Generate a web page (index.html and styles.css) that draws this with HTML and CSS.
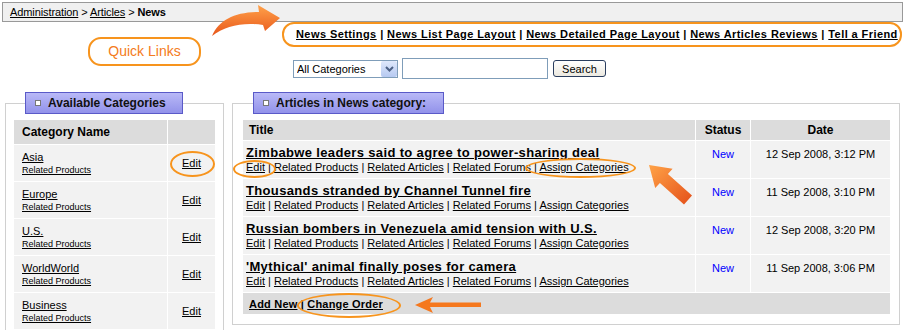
FILE: index.html
```html
<!DOCTYPE html>
<html lang="en">
<head>
    <meta charset="UTF-8">
    <title>News - Administration</title>
    <link rel="stylesheet" href="styles.css">
</head>
<body>
    <div class="crumbs">
        <a href="#">Administration</a> &gt; <a href="#">Articles</a> &gt; <b>News</b>
    </div>

    <div class="quick-links">
        <a href="#">News Settings</a> | <a href="#">News List Page Layout</a> | <a href="#">News Detailed Page Layout</a> | <a href="#">News Articles Reviews</a> | <a href="#">Tell a Friend</a>
    </div>

    <form class="search" onsubmit="return false">
        <span class="select-wrap">
            <select>
                <option>All Categories</option>
                <option>Asia</option>
                <option>Europe</option>
            </select>
            <span class="select-btn">
                <svg width="9" height="6" viewBox="0 0 9 6"><path d="M1 1 L4.5 4.5 L8 1" fill="none" stroke="#4d6185" stroke-width="2"/></svg>
            </span>
        </span>
        <input type="text" class="search-box">
        <button type="submit" class="search-btn">Search</button>
    </form>

    <div class="panels">
        <fieldset class="panel panel-left">
            <legend><span class="box"></span>Available Categories</legend>
            <table class="grid cats">
                <tr class="head">
                    <th class="name">Category Name</th>
                    <th></th>
                </tr>
                <tr>
                    <td class="name"><a href="#">Asia</a><br><a href="#" class="small">Related Products</a></td>
                    <td class="edit"><a href="#">Edit</a></td>
                </tr>
                <tr>
                    <td class="name"><a href="#">Europe</a><br><a href="#" class="small">Related Products</a></td>
                    <td class="edit"><a href="#">Edit</a></td>
                </tr>
                <tr>
                    <td class="name"><a href="#">U.S.</a><br><a href="#" class="small">Related Products</a></td>
                    <td class="edit"><a href="#">Edit</a></td>
                </tr>
                <tr>
                    <td class="name"><a href="#">WorldWorld</a><br><a href="#" class="small">Related Products</a></td>
                    <td class="edit"><a href="#">Edit</a></td>
                </tr>
                <tr>
                    <td class="name"><a href="#">Business</a><br><a href="#" class="small">Related Products</a></td>
                    <td class="edit"><a href="#">Edit</a></td>
                </tr>
            </table>
        </fieldset>

        <fieldset class="panel panel-right">
            <legend><span class="box"></span>Articles in News category:</legend>
            <table class="grid articles">
                <tr class="head">
                    <th class="title">Title</th>
                    <th class="status">Status</th>
                    <th class="date">Date</th>
                </tr>
                <tr>
                    <td class="title">
                        <a href="#" class="headline">Zimbabwe leaders said to agree to power-sharing deal</a><br>
                        <a href="#">Edit</a> | <a href="#">Related Products</a> | <a href="#">Related Articles</a> | <a href="#">Related Forums</a> | <a href="#">Assign Categories</a>
                    </td>
                    <td class="status"><span class="new">New</span></td>
                    <td class="date">12 Sep 2008, 3:12 PM</td>
                </tr>
                <tr>
                    <td class="title">
                        <a href="#" class="headline">Thousands stranded by Channel Tunnel fire</a><br>
                        <a href="#">Edit</a> | <a href="#">Related Products</a> | <a href="#">Related Articles</a> | <a href="#">Related Forums</a> | <a href="#">Assign Categories</a>
                    </td>
                    <td class="status"><span class="new">New</span></td>
                    <td class="date">11 Sep 2008, 3:10 PM</td>
                </tr>
                <tr>
                    <td class="title">
                        <a href="#" class="headline">Russian bombers in Venezuela amid tension with U.S.</a><br>
                        <a href="#">Edit</a> | <a href="#">Related Products</a> | <a href="#">Related Articles</a> | <a href="#">Related Forums</a> | <a href="#">Assign Categories</a>
                    </td>
                    <td class="status"><span class="new">New</span></td>
                    <td class="date">12 Sep 2008, 3:20 PM</td>
                </tr>
                <tr>
                    <td class="title">
                        <a href="#" class="headline">'Mythical' animal finally poses for camera</a><br>
                        <a href="#">Edit</a> | <a href="#">Related Products</a> | <a href="#">Related Articles</a> | <a href="#">Related Forums</a> | <a href="#">Assign Categories</a>
                    </td>
                    <td class="status"><span class="new">New</span></td>
                    <td class="date">11 Sep 2008, 3:06 PM</td>
                </tr>
                <tr class="foot">
                    <td colspan="3"><a href="#">Add New</a> | <a href="#">Change Order</a></td>
                </tr>
            </table>
        </fieldset>
    </div>

    <!-- callouts drawn over the page -->
    <div class="pill">Quick Links</div>
    <svg class="arrow-curve" width="80" height="40" viewBox="0 0 80 40">
        <defs>
            <linearGradient id="gc" x1="0" y1="0" x2="0" y2="1">
                <stop offset="0" stop-color="#ffa24a"/>
                <stop offset="1" stop-color="#e8561a"/>
            </linearGradient>
        </defs>
        <path d="M7,36 C14,20 30,12 54,12 L53,5 L75,18 L60,31 L58,25 C38,22 20,26 7,36 Z" fill="url(#gc)"/>
    </svg>
    <svg class="arrow-diag" width="60" height="55" viewBox="0 0 60 55">
        <defs>
            <linearGradient id="gd" x1="0" y1="0" x2="1" y2="1">
                <stop offset="0" stop-color="#ffa347"/>
                <stop offset="1" stop-color="#e4501a"/>
            </linearGradient>
        </defs>
        <polygon points="9,10 32.6,13.7 27.9,18.9 52,40.5 44,49.5 19.9,27.9 15.2,33.1" fill="url(#gd)"/>
    </svg>
    <svg class="arrow-left" width="72" height="22" viewBox="0 0 72 22">
        <polygon points="3,11 21,3 18,8.5 69,8.5 69,13 18,13 21,19" fill="#f5781e"/>
    </svg>
    <div class="ring ring-cat"></div>
    <div class="ring ring-edit"></div>
    <div class="ring ring-assign"></div>
    <div class="ring ring-order"></div>
</body>
</html>
```

FILE: styles.css
```css
*{
    box-sizing: border-box;
}
body{
    margin: 0;
    position: relative;
    width: 904px;
    height: 330px;
    overflow: hidden;
    background: #fff;
    color: #000;
    font-family: Tahoma, "Liberation Sans", Arial, sans-serif;
    font-size: 11px;
}
a{
    color: #000;
    text-decoration: underline;
}
.crumbs{
    margin: 2px 1px 0 2px;
    height: 20px;
    padding-left: 7px;
    border: 1px solid #999;
    background: #f0f0f0;
    line-height: 18px;
    font-size: 11px;
    letter-spacing: -0.1px;
}
.quick-links{
    margin: 0 2px 0 282px;
    height: 25px;
    padding: 0 0 0 12px;
    border: 2px solid #f7941d;
    border-radius: 12px;
    line-height: 21px;
    font-weight: bold;
    font-size: 11px;
    letter-spacing: 0.42px;
    white-space: nowrap;
    overflow: hidden;
}
.search{
    display: flex;
    align-items: center;
    margin: 11px 0 0 293px;
    height: 21px;
}
.select-wrap{
    position: relative;
    display: inline-block;
}
.select-wrap select{
    appearance: none;
    width: 105px;
    height: 18px;
    padding: 0 0 0 3px;
    border: 1px solid #7f9db9;
    border-radius: 0;
    background: #fff;
    font-family: inherit;
    font-size: 11px;
    color: #000;
}
.select-btn{
    position: absolute;
    right: 1px;
    top: 1px;
    width: 16px;
    height: 16px;
    border-radius: 2px;
    background: linear-gradient(#dfe8fb, #b6c9f1);
    display: flex;
    align-items: center;
    justify-content: center;
    pointer-events: none;
}
.search-box{
    width: 146px;
    height: 21px;
    margin-left: 4px;
    border: 1px solid #7f9db9;
    padding: 1px 3px;
}
.search-btn{
    width: 53px;
    height: 17px;
    margin-left: 5px;
    padding: 0;
    border: 1px solid #2a3d5e;
    border-radius: 3px;
    background: linear-gradient(#fff, #ece9e0);
    font-family: inherit;
    font-size: 11px;
    color: #000;
}
.panels{
    display: flex;
    align-items: flex-start;
    gap: 8px;
    margin: 13px 0 0 5px;
}
.panel{
    margin: 0;
    border: 1px solid #d0d0d0;
    padding: 5px 7px 9px 7px;
}
.panel-left{
    width: 219px;
    height: 240px;
}
.panel-right{
    width: 668px;
    padding: 5px 8px 9px 9px;
}
.panel legend{
    margin-left: 12px;
    height: 22px;
    padding: 0 16px 0 9px;
    border: 1px solid #5a5ac8;
    background: linear-gradient(#b9b9f7, #9292ea);
    font-weight: bold;
    font-size: 12px;
    line-height: 20px;
    color: #111;
}
.panel-right legend{
    margin-left: 11px;
    padding-right: 17px;
}
.box{
    display: inline-block;
    width: 6px;
    height: 6px;
    margin-right: 7px;
    border: 1px solid #777;
    background: #fff;
    vertical-align: 1px;
}
.grid{
    width: 100%;
    border-collapse: separate;
    border-spacing: 1px;
}
.grid th{
    background: #dcdcdc;
    font-size: 12px;
    font-weight: bold;
    text-align: center;
}
.grid td{
    background: #f2f2f2;
}
.cats .head th{
    height: 24px;
}
.cats th.name,
.cats td.name{
    text-align: left;
    padding-left: 8px;
}
.cats td{
    height: 36px;
    font-size: 11px;
    line-height: 12px;
}
.cats .small{
    font-size: 9px;
}
.cats td.edit{
    width: 47px;
    text-align: center;
    font-size: 11px;
}
.articles .head th{
    height: 20px;
}
.articles th.title{
    text-align: left;
    padding-left: 6px;
}
.articles td{
    height: 37px;
    vertical-align: top;
    padding: 4px 3px 2px 3px;
    font-size: 11px;
    line-height: 14px;
}
.articles .headline{
    font-size: 13px;
    font-weight: bold;
    line-height: 15px;
    letter-spacing: 0.35px;
}
.articles .status{
    width: 54px;
    text-align: center;
}
.articles td.status,
.articles td.date{
    padding-top: 6px;
}
.articles .date{
    width: 139px;
    text-align: center;
}
.new{
    color: #0000ff;
}
.articles .foot td{
    height: 21px;
    background: #dcdcdc;
    vertical-align: middle;
    padding: 0 6px;
    font-weight: bold;
    letter-spacing: 0.2px;
}
.pill{
    position: absolute;
    left: 88px;
    top: 37px;
    width: 113px;
    height: 29px;
    border: 2px solid #f7941d;
    border-radius: 13px;
    color: #f47b20;
    font-family: Tahoma, "Liberation Sans", Arial, sans-serif;
    font-size: 14px;
    line-height: 25px;
    text-align: center;
}
.arrow-curve{
    position: absolute;
    left: 205px;
    top: 0;
}
.arrow-diag{
    position: absolute;
    left: 640px;
    top: 155px;
}
.arrow-left{
    position: absolute;
    left: 412px;
    top: 294px;
}
.ring{
    position: absolute;
    border: 2px solid #f7941d;
    border-radius: 50%;
}
.ring-cat{
    left: 170px;
    top: 151px;
    width: 45px;
    height: 26px;
}
.ring-edit{
    left: 233px;
    top: 160px;
    width: 43px;
    height: 18px;
}
.ring-assign{
    left: 525px;
    top: 158px;
    width: 111px;
    height: 20px;
}
.ring-order{
    left: 297px;
    top: 293px;
    width: 104px;
    height: 25px;
}
```
